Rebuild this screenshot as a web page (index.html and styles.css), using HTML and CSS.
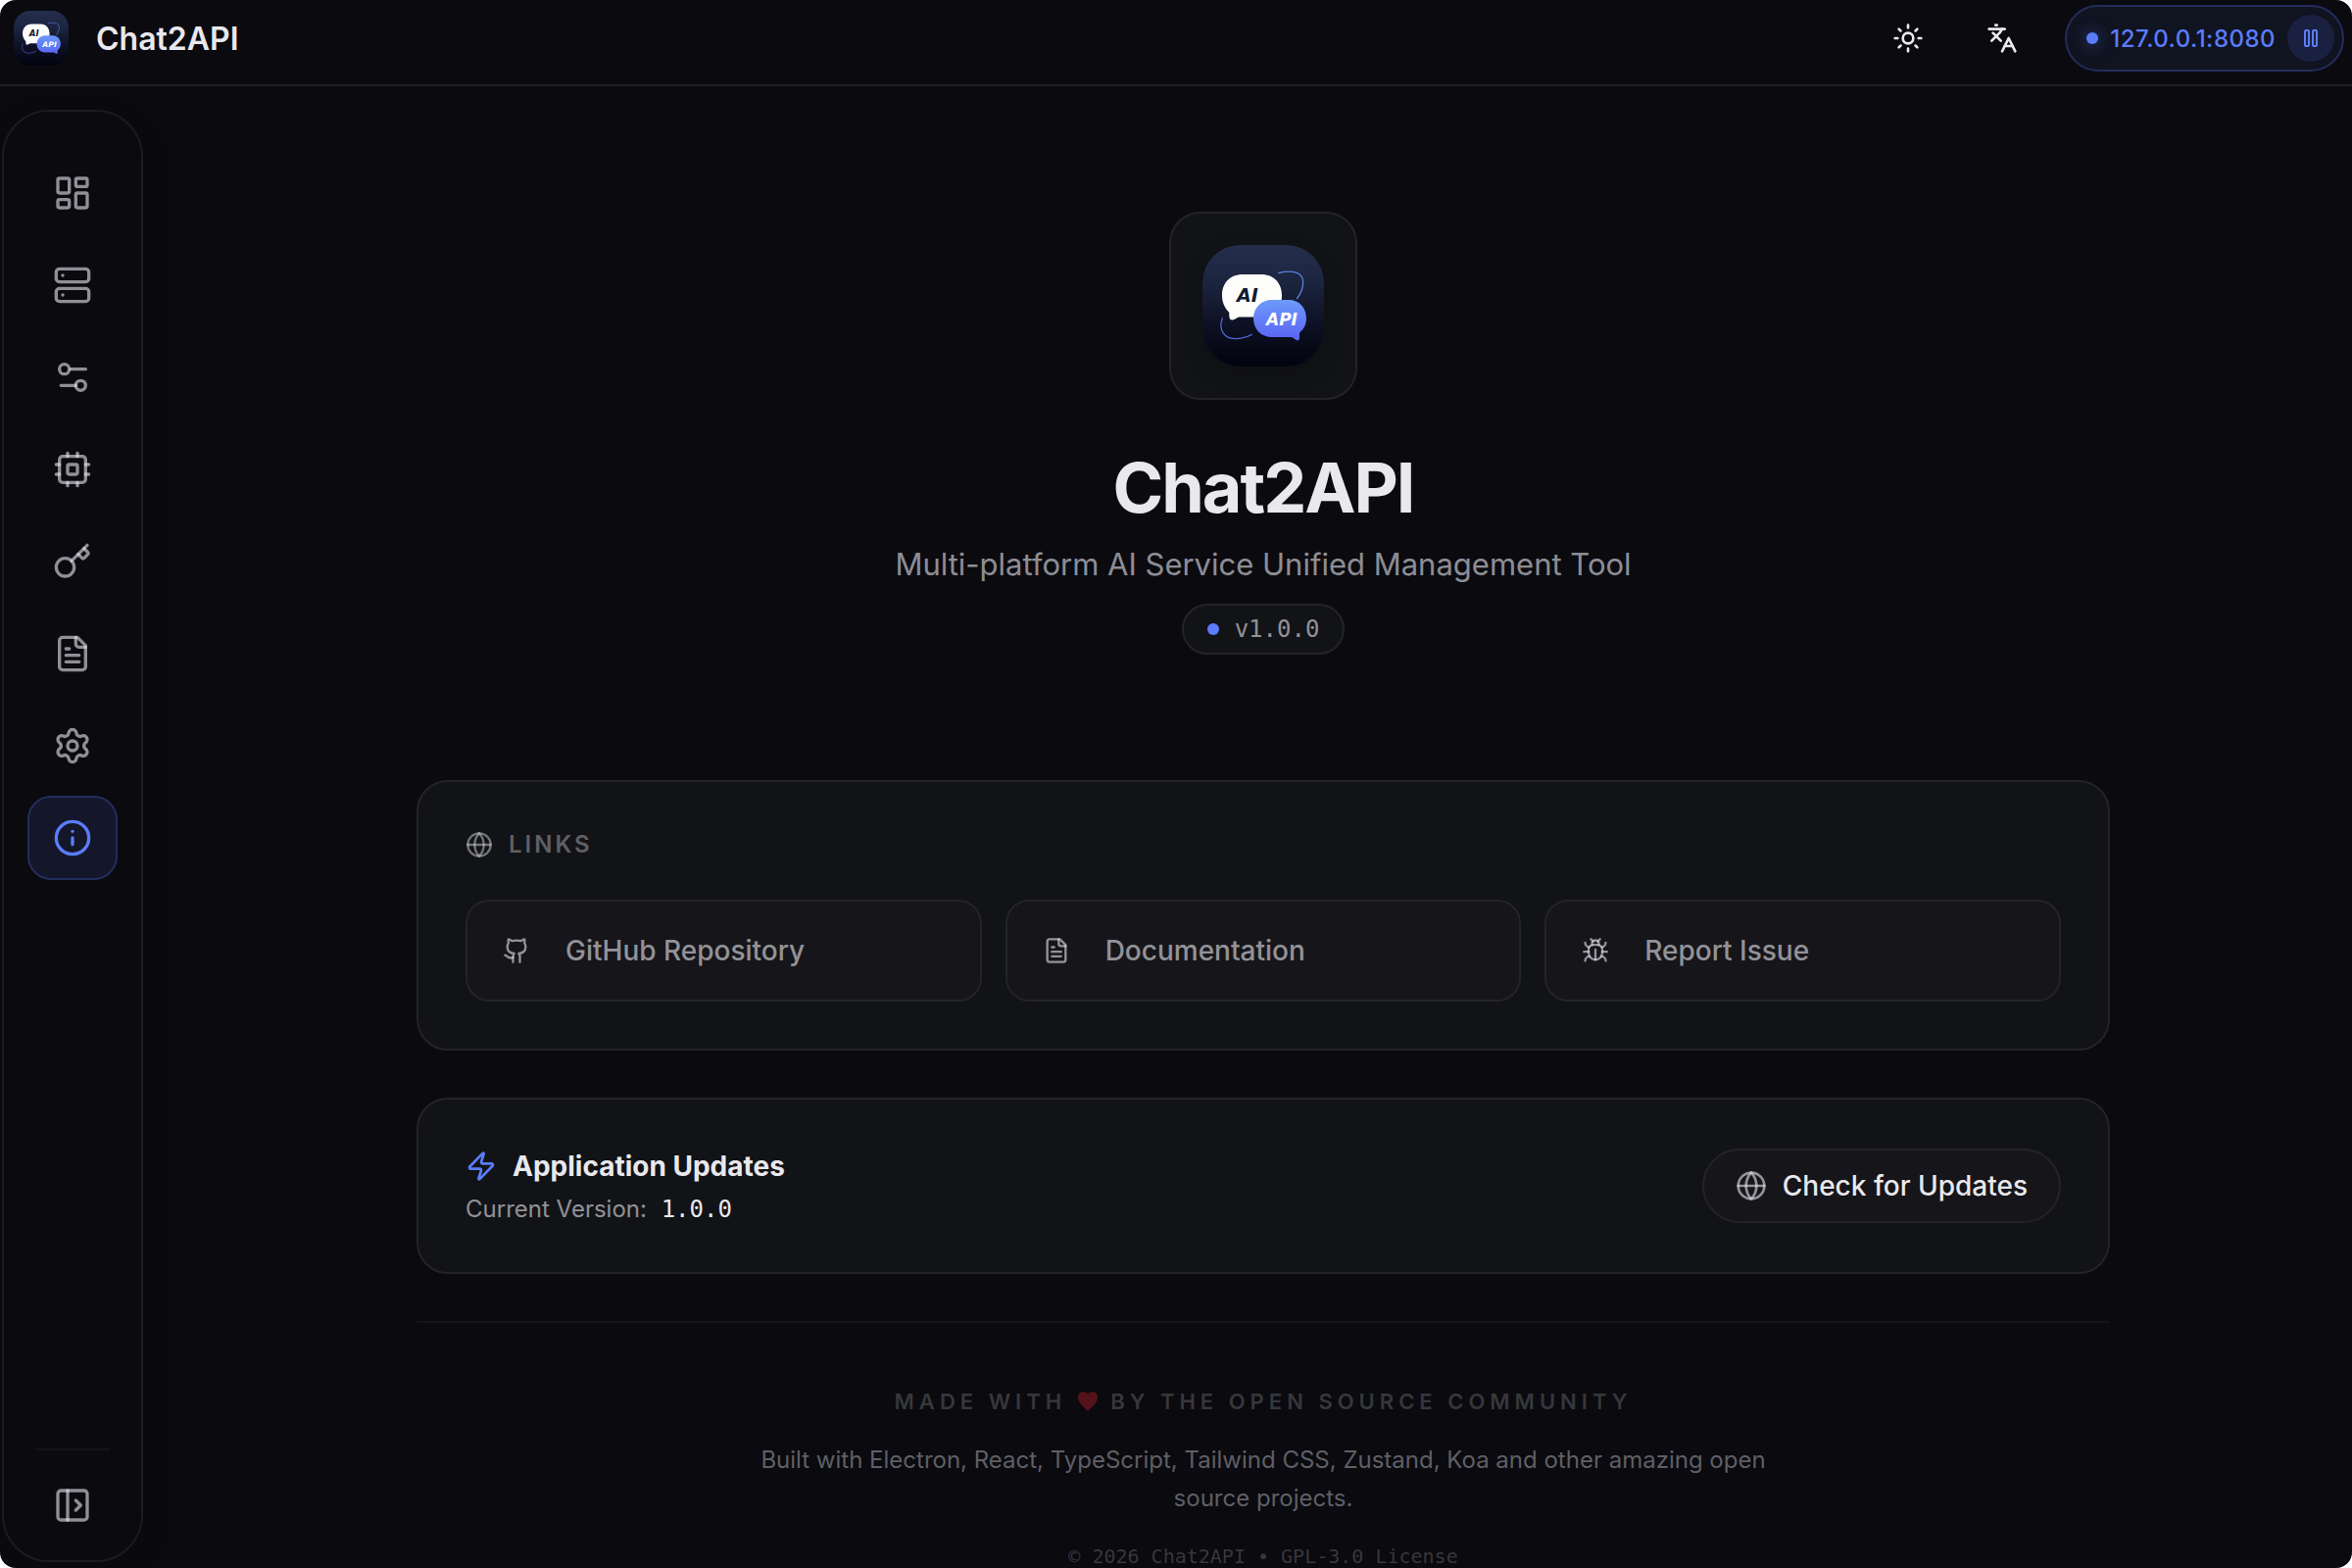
FILE: index.html
```html
<!DOCTYPE html>
<html lang="en">
<head>
  <meta charset="UTF-8">
  <title>Chat2API</title>
  <link rel="stylesheet" href="styles.css">
</head>
<body>
  <!-- Shared shapes -->
  <svg class="defs" width="0" height="0" aria-hidden="true">
    <defs>
      <linearGradient id="logoBg" x1="0" y1="0" x2="0" y2="1">
        <stop offset="0" stop-color="#242e4c" />
        <stop offset="0.3" stop-color="#1c2540" />
        <stop offset="0.65" stop-color="#0d1124" />
        <stop offset="1" stop-color="#02030e" />
      </linearGradient>
      <linearGradient id="logoBlue" x1="0" y1="0" x2="0" y2="1">
        <stop offset="0" stop-color="#6d9afb" />
        <stop offset="1" stop-color="#5a62f4" />
      </linearGradient>
    </defs>
    <symbol id="logo" viewBox="0 0 124 124">
      <rect width="124" height="124" rx="38" fill="url(#logoBg)" />
      <path d="M78 28.500C92 25 103 28 102.700 38C102.700 43 100 50 96.500 54.500" fill="none" stroke="#5b82dc" stroke-width="1.300" stroke-linecap="round" />
      <path d="M20.300 74.700C16 87 22 95.700 34.700 95.700C40 95.700 45 94 50.300 91.300" fill="none" stroke="#5468d8" stroke-width="1.300" stroke-linecap="round" />
      <path d="M41 30H60C73 30 81 39 81 51.500C81 65 73 73.500 60 73.500H37C35 74 33 76.500 30.500 76.500C27.500 76.500 27 74 27.300 69C22.500 64 20 58.500 20 51.500C20 39 28 30 41 30Z" fill="#fdfdfc" />
      <path d="M71 56H88C99 56 106 64 106 75C106 81 103.500 86 99 89.500V95C99 98 96 98 93.500 95.500L91 94H71C60 94 52 86 52 75C52 64 60 56 71 56Z" fill="url(#logoBlue)" />
      <text class="logo-text" x="35" y="58" font-size="19" fill="#121a30">AI</text>
      <text class="logo-text" x="65" y="82" font-size="17" fill="#ffffff">API</text>
    </symbol>
    <symbol id="globe" viewBox="0 0 24 24">
      <circle cx="12" cy="12" r="10" />
      <path d="M12 2a14.500 14.500 0 0 0 0 20 14.500 14.500 0 0 0 0-20" />
      <path d="M2 12h20" />
    </symbol>
    <symbol id="file" viewBox="0 0 24 24">
      <path d="M15 2H6a2 2 0 0 0-2 2v16a2 2 0 0 0 2 2h12a2 2 0 0 0 2-2V7Z" />
      <path d="M14 2v4a2 2 0 0 0 2 2h4" />
      <path d="M10 9H8" />
      <path d="M16 13H8" />
      <path d="M16 17H8" />
    </symbol>
  </svg>

  <div class="app">
    <header class="topbar">
      <svg class="topbar-logo" role="img" aria-label="Chat2API logo"><use href="#logo" /></svg>
      <span class="topbar-title">Chat2API</span>
      <div class="topbar-actions">
        <button class="icon-btn" type="button" aria-label="Toggle theme">
          <svg class="icon icon-md" viewBox="0 0 24 24">
            <circle cx="12" cy="12" r="4" />
            <path d="M12 2v2M12 20v2M4.930 4.930l1.410 1.410M17.660 17.660l1.410 1.410M2 12h2M20 12h2M6.340 17.660l-1.410 1.410M19.070 4.930l-1.410 1.410" />
          </svg>
        </button>
        <button class="icon-btn" type="button" aria-label="Change language">
          <svg class="icon icon-md" viewBox="0 0 24 24">
            <path d="m5 8 6 6" />
            <path d="m4 14 6-6 2-3" />
            <path d="M2 5h12" />
            <path d="M7 2h1" />
            <path d="m22 22-5-10-5 10" />
            <path d="M14 18h6" />
          </svg>
        </button>
        <div class="server">
          <span class="server-dot"></span>
          <span class="server-address">127.0.0.1:8080</span>
          <button class="server-btn" type="button" aria-label="Pause proxy">
            <svg class="icon icon-xs" viewBox="0 0 24 24">
              <rect x="14" y="4" width="4" height="16" rx="1" />
              <rect x="6" y="4" width="4" height="16" rx="1" />
            </svg>
          </button>
        </div>
      </div>
    </header>

    <div class="body">
      <aside class="sidebar">
        <nav class="nav">
          <a class="nav-item" href="#dashboard" aria-label="Dashboard">
            <svg class="icon icon-lg" viewBox="0 0 24 24">
              <rect x="3" y="3" width="7" height="9" rx="1" />
              <rect x="14" y="3" width="7" height="5" rx="1" />
              <rect x="14" y="12" width="7" height="9" rx="1" />
              <rect x="3" y="16" width="7" height="5" rx="1" />
            </svg>
          </a>
          <a class="nav-item" href="#providers" aria-label="Providers">
            <svg class="icon icon-lg" viewBox="0 0 24 24">
              <rect x="2" y="2" width="20" height="8" rx="2" />
              <rect x="2" y="14" width="20" height="8" rx="2" />
              <path d="M6 6h.01" />
              <path d="M6 18h.01" />
            </svg>
          </a>
          <a class="nav-item" href="#proxy" aria-label="Proxy settings">
            <svg class="icon icon-lg" viewBox="0 0 24 24">
              <path d="M20 7h-9" />
              <path d="M14 17H5" />
              <circle cx="17" cy="17" r="3" />
              <circle cx="7" cy="7" r="3" />
            </svg>
          </a>
          <a class="nav-item" href="#models" aria-label="Models">
            <svg class="icon icon-lg" viewBox="0 0 24 24">
              <rect x="4" y="4" width="16" height="16" rx="2" />
              <rect x="9" y="9" width="6" height="6" rx="1" />
              <path d="M15 2v2" /><path d="M15 20v2" />
              <path d="M2 15h2" /><path d="M2 9h2" />
              <path d="M20 15h2" /><path d="M20 9h2" />
              <path d="M9 2v2" /><path d="M9 20v2" />
            </svg>
          </a>
          <a class="nav-item" href="#keys" aria-label="API keys">
            <svg class="icon icon-lg" viewBox="0 0 24 24">
              <path d="m15.500 7.500 2.300 2.300a1 1 0 0 0 1.400 0l2.100-2.100a1 1 0 0 0 0-1.400L19 4" />
              <path d="m21 2-9.600 9.600" />
              <circle cx="7.500" cy="15.500" r="5.500" />
            </svg>
          </a>
          <a class="nav-item" href="#logs" aria-label="Logs">
            <svg class="icon icon-lg"><use href="#file" /></svg>
          </a>
          <a class="nav-item" href="#settings" aria-label="Settings">
            <svg class="icon icon-lg" viewBox="0 0 24 24">
              <path d="M9.671 4.136a2.340 2.340 0 0 1 4.659 0 2.340 2.340 0 0 0 3.319 1.915 2.340 2.340 0 0 1 2.330 4.033 2.340 2.340 0 0 0 0 3.831 2.340 2.340 0 0 1-2.330 4.033 2.340 2.340 0 0 0-3.319 1.915 2.340 2.340 0 0 1-4.659 0 2.340 2.340 0 0 0-3.320-1.915 2.340 2.340 0 0 1-2.330-4.033 2.340 2.340 0 0 0 0-3.831A2.340 2.340 0 0 1 6.350 6.051a2.340 2.340 0 0 0 3.319-1.915" />
              <circle cx="12" cy="12" r="3" />
            </svg>
          </a>
          <a class="nav-item active" href="#about" aria-label="About" aria-current="page">
            <svg class="icon icon-lg" viewBox="0 0 24 24">
              <circle cx="12" cy="12" r="10" />
              <path d="M12 16v-4" />
              <path d="M12 8h.01" />
            </svg>
          </a>
        </nav>
        <div class="sidebar-footer">
          <button class="collapse-btn" type="button" aria-label="Expand sidebar">
            <svg class="icon icon-lg" viewBox="0 0 24 24">
              <rect x="3" y="3" width="18" height="18" rx="2" />
              <path d="M9 3v18" />
              <path d="m14 9 3 3-3 3" />
            </svg>
          </button>
        </div>
      </aside>

      <main class="main">
        <div class="content">
          <section class="hero">
            <div class="hero-tile">
              <svg class="hero-logo" role="img" aria-label="Chat2API logo"><use href="#logo" /></svg>
            </div>
            <h1>Chat2API</h1>
            <p class="hero-subtitle">Multi-platform AI Service Unified Management Tool</p>
            <span class="version"><span class="version-dot"></span>v1.0.0</span>
          </section>

          <section class="card">
            <h2 class="card-label">
              <svg class="icon icon-sm"><use href="#globe" /></svg>
              Links
            </h2>
            <div class="links">
              <a class="link" href="#github">
                <span class="link-icon">
                  <svg class="icon icon-sm" viewBox="0 0 24 24">
                    <path d="M15 22v-4a4.800 4.800 0 0 0-1-3.500c3 0 6-2 6-5.500.08-1.250-.27-2.480-1-3.500.28-1.150.28-2.350 0-3.500 0 0-1 0-3 1.500-2.640-.5-5.360-.5-8 0C6 2 5 2 5 2c-.3 1.150-.3 2.350 0 3.500A5.403 5.403 0 0 0 4 9c0 3.500 3 5.500 6 5.500-.39.49-.68 1.050-.85 1.650-.17.6-.22 1.230-.15 1.850v4" />
                    <path d="M9 18c-4.510 2-5-2-7-2" />
                  </svg>
                </span>
                GitHub Repository
              </a>
              <a class="link" href="#docs">
                <span class="link-icon"><svg class="icon icon-sm"><use href="#file" /></svg></span>
                Documentation
              </a>
              <a class="link" href="#issues">
                <span class="link-icon">
                  <svg class="icon icon-sm" viewBox="0 0 24 24">
                    <path d="m8 2 1.880 1.880" />
                    <path d="M14.120 3.880 16 2" />
                    <path d="M9 7.130v-1a3.003 3.003 0 1 1 6 0v1" />
                    <path d="M12 20c-3.300 0-6-2.700-6-6v-3a4 4 0 0 1 4-4h4a4 4 0 0 1 4 4v3c0 3.300-2.700 6-6 6" />
                    <path d="M12 20v-9" />
                    <path d="M6.530 9C4.600 8.800 3 7.100 3 5" />
                    <path d="M6 13H2" />
                    <path d="M3 21c0-2.100 1.700-3.900 3.800-4" />
                    <path d="M20.970 5c0 2.100-1.600 3.800-3.500 4" />
                    <path d="M22 13h-4" />
                    <path d="M17.200 17c2.100.1 3.800 1.900 3.800 4" />
                  </svg>
                </span>
                Report Issue
              </a>
            </div>
          </section>

          <section class="card updates">
            <div>
              <h2 class="updates-title">
                <svg class="icon icon-md" viewBox="0 0 24 24">
                  <path d="M4 14a1 1 0 0 1-.78-1.630l9.900-10.200a.5.5 0 0 1 .86.46l-1.920 6.020A1 1 0 0 0 13 10h7a1 1 0 0 1 .78 1.630l-9.900 10.200a.5.5 0 0 1-.86-.46l1.920-6.020A1 1 0 0 0 11 14z" />
                </svg>
                Application Updates
              </h2>
              <p class="updates-version">Current Version: <span class="updates-number">1.0.0</span></p>
            </div>
            <button class="check-btn" type="button">
              <svg class="icon icon-md"><use href="#globe" /></svg>
              Check for Updates
            </button>
          </section>

          <footer class="footer">
            <p class="footer-made">
              Made with
              <svg class="heart" viewBox="0 0 24 24" role="img" aria-label="love">
                <path d="M12 23C9 19 1 14 1 7.500C1 3.500 3.800 1 7 1C9.200 1 11 2.200 12 4C13 2.200 14.800 1 17 1C20.200 1 23 3.500 23 7.500C23 14 15 19 12 23Z" />
              </svg>
              by the open source community
            </p>
            <p class="footer-text">Built with Electron, React, TypeScript, Tailwind CSS, Zustand, Koa and other amazing open source projects.</p>
            <p class="footer-copy">© 2026 Chat2API • GPL-3.0 License</p>
          </footer>
        </div>
      </main>
    </div>
  </div>
</body>
</html>
```
FILE: styles.css
```css
:root {
  --bg: #0a0a0f;
  --card: #121316;
  --item: #161519;
  --line: #242428;
  --text: #e8e8ed;
  --muted: rgba(232, 232, 240, 0.6);
  --accent: #5b7cfa;
  --mono: "DejaVu Sans Mono", "Liberation Mono", monospace;
}

* {
  box-sizing: border-box;
}

html {
  background: #ffffff;
}

body {
  margin: 0;
  font-family: Inter, "Liberation Sans", sans-serif;
  color: var(--text);
}

h1, h2, p {
  margin: 0;
}

button {
  font-family: inherit;
  color: inherit;
  background: none;
  border: none;
  padding: 0;
  cursor: pointer;
}

a {
  color: inherit;
  text-decoration: none;
}

.defs {
  position: absolute;
}

.app {
  display: flex;
  flex-direction: column;
  height: 100vh;
  overflow: hidden;
  background: var(--bg);
  border-radius: 16px;
}

/* Icons */
.icon {
  flex: none;
  fill: none;
  stroke: currentColor;
  stroke-width: 2;
  stroke-linecap: round;
  stroke-linejoin: round;
}

.icon-xs {
  width: 24px;
  height: 24px;
}

.icon-sm {
  width: 28px;
  height: 28px;
}

.icon-md {
  width: 32px;
  height: 32px;
}

.icon-lg {
  width: 40px;
  height: 40px;
}

.logo-text {
  font-family: "DejaVu Sans", sans-serif;
  font-weight: 700;
  font-style: italic;
}

/* Top bar */
.topbar {
  flex: none;
  display: flex;
  align-items: center;
  height: 88px;
  padding: 0 8px 8px 14px;
  border-bottom: 2px solid #1e1e22;
}

.topbar-logo {
  width: 56px;
  height: 56px;
  margin-right: 28px;
}

.topbar-title {
  font-size: 32px;
  font-weight: 600;
}

.topbar-actions {
  display: flex;
  align-items: center;
  gap: 32px;
  margin-left: auto;
}

.icon-btn {
  display: flex;
  align-items: center;
  justify-content: center;
  width: 64px;
  height: 64px;
}

.server {
  display: flex;
  align-items: center;
  gap: 12px;
  height: 68px;
  padding: 0 8px 0 20px;
  border: 2px solid #232d5c;
  border-radius: 34px;
  background: #101320;
  color: var(--accent);
}

.server-dot {
  width: 12px;
  height: 12px;
  border-radius: 50%;
  background: var(--accent);
  box-shadow: 0 0 16px rgba(91, 124, 250, 0.6);
}

.server-address {
  font-size: 24px;
  font-weight: 500;
  letter-spacing: 0.02em;
}

.server-btn {
  display: flex;
  align-items: center;
  justify-content: center;
  width: 48px;
  height: 48px;
  border-radius: 50%;
  background: #1a2040;
}

/* Sidebar */
.body {
  flex: 1;
  display: flex;
  min-height: 0;
}

.sidebar {
  flex: none;
  display: flex;
  flex-direction: column;
  justify-content: space-between;
  width: 144px;
  margin: 24px 32px 6px 2px;
  padding: 40px 24px 16px;
  border: 2px solid #1b1b20;
  border-radius: 48px;
  box-shadow: 0 8px 32px rgba(0, 0, 0, 0.1);
}

.nav {
  display: flex;
  flex-direction: column;
  gap: 8px;
}

.nav-item {
  display: flex;
  align-items: center;
  justify-content: center;
  height: 86px;
  border: 2px solid transparent;
  border-radius: 24px;
  color: var(--muted);
}

.nav-item.active {
  color: var(--accent);
  background: #14162a;
  border-color: #232d5c;
}

.sidebar-footer {
  margin: 0 8px;
  padding-top: 16px;
  border-top: 2px solid #151519;
}

.collapse-btn {
  display: flex;
  align-items: center;
  justify-content: center;
  width: 100%;
  height: 80px;
  color: var(--muted);
}

/* About page */
.main {
  flex: 1;
  min-width: 0;
  overflow: hidden;
}

.content {
  max-width: 1728px;
  margin: 0 auto;
  padding-top: 128px;
}

.hero {
  display: flex;
  flex-direction: column;
  align-items: center;
  margin-bottom: 128px;
}

.hero-tile {
  padding: 32px;
  border: 2px solid var(--line);
  border-radius: 32px;
  background: var(--card);
}

.hero-logo {
  display: block;
  width: 124px;
  height: 124px;
  border-radius: 38px;
  box-shadow: 0 8px 24px rgba(0, 0, 0, 0.2);
}

.hero h1 {
  margin-top: 48px;
  font-size: 70px;
  line-height: 84px;
  font-weight: 700;
  letter-spacing: -2px;
}

.hero-subtitle {
  margin-top: 12px;
  font-size: 31px;
  line-height: 48px;
  color: var(--muted);
}

.version {
  display: flex;
  align-items: center;
  gap: 16px;
  height: 52px;
  margin-top: 16px;
  padding: 0 24px;
  border: 2px solid var(--line);
  border-radius: 26px;
  background: var(--card);
  font-family: var(--mono);
  font-size: 24px;
  color: var(--muted);
}

.version-dot {
  width: 12px;
  height: 12px;
  border-radius: 50%;
  background: var(--accent);
}

.card {
  margin-bottom: 48px;
  padding: 48px;
  border: 2px solid var(--line);
  border-radius: 32px;
  background: var(--card);
}

.card-label {
  display: flex;
  align-items: center;
  gap: 16px;
  margin-bottom: 40px;
  font-size: 24px;
  line-height: 32px;
  font-weight: 600;
  letter-spacing: 3px;
  text-transform: uppercase;
  color: #5f5f65;
}

.card-label .icon {
  color: rgba(232, 232, 240, 0.45);
}

.links {
  display: grid;
  grid-template-columns: repeat(3, 1fr);
  gap: 24px;
}

.link {
  display: flex;
  align-items: center;
  gap: 24px;
  height: 104px;
  padding: 0 24px;
  border: 2px solid var(--line);
  border-radius: 24px;
  background: var(--item);
  font-size: 28px;
  font-weight: 500;
  color: var(--muted);
}

.link-icon {
  display: flex;
  justify-content: center;
  width: 52px;
}

.updates {
  display: flex;
  align-items: center;
  justify-content: space-between;
}

.updates-title {
  display: flex;
  align-items: center;
  gap: 16px;
  font-size: 28px;
  line-height: 40px;
  font-weight: 700;
}

.updates-title .icon {
  color: var(--accent);
}

.updates-version {
  margin-top: 8px;
  font-size: 24px;
  line-height: 32px;
  color: var(--muted);
}

.updates-number {
  margin-left: 8px;
  font-family: var(--mono);
  color: var(--text);
}

.check-btn {
  display: flex;
  align-items: center;
  gap: 16px;
  height: 76px;
  padding: 0 32px;
  border: 2px solid var(--line);
  border-radius: 38px;
  background: var(--item);
  font-size: 28px;
  font-weight: 500;
}

.check-btn .icon {
  color: var(--muted);
}

/* Footer */
.footer {
  display: flex;
  flex-direction: column;
  align-items: center;
  gap: 24px;
  padding-top: 64px;
  border-top: 2px solid #151519;
  text-align: center;
}

.footer-made {
  font-size: 22px;
  line-height: 32px;
  font-weight: 600;
  letter-spacing: 5px;
  text-transform: uppercase;
  color: #37373b;
}

.heart {
  width: 22px;
  height: 22px;
  margin-right: 2px;
  vertical-align: -3px;
  fill: #541219;
}

.footer-text {
  max-width: 1040px;
  font-size: 24px;
  line-height: 39px;
  color: #5f5f65;
}

.footer-copy {
  font-family: var(--mono);
  font-size: 20px;
  line-height: 32px;
  color: #37373b;
}
```
